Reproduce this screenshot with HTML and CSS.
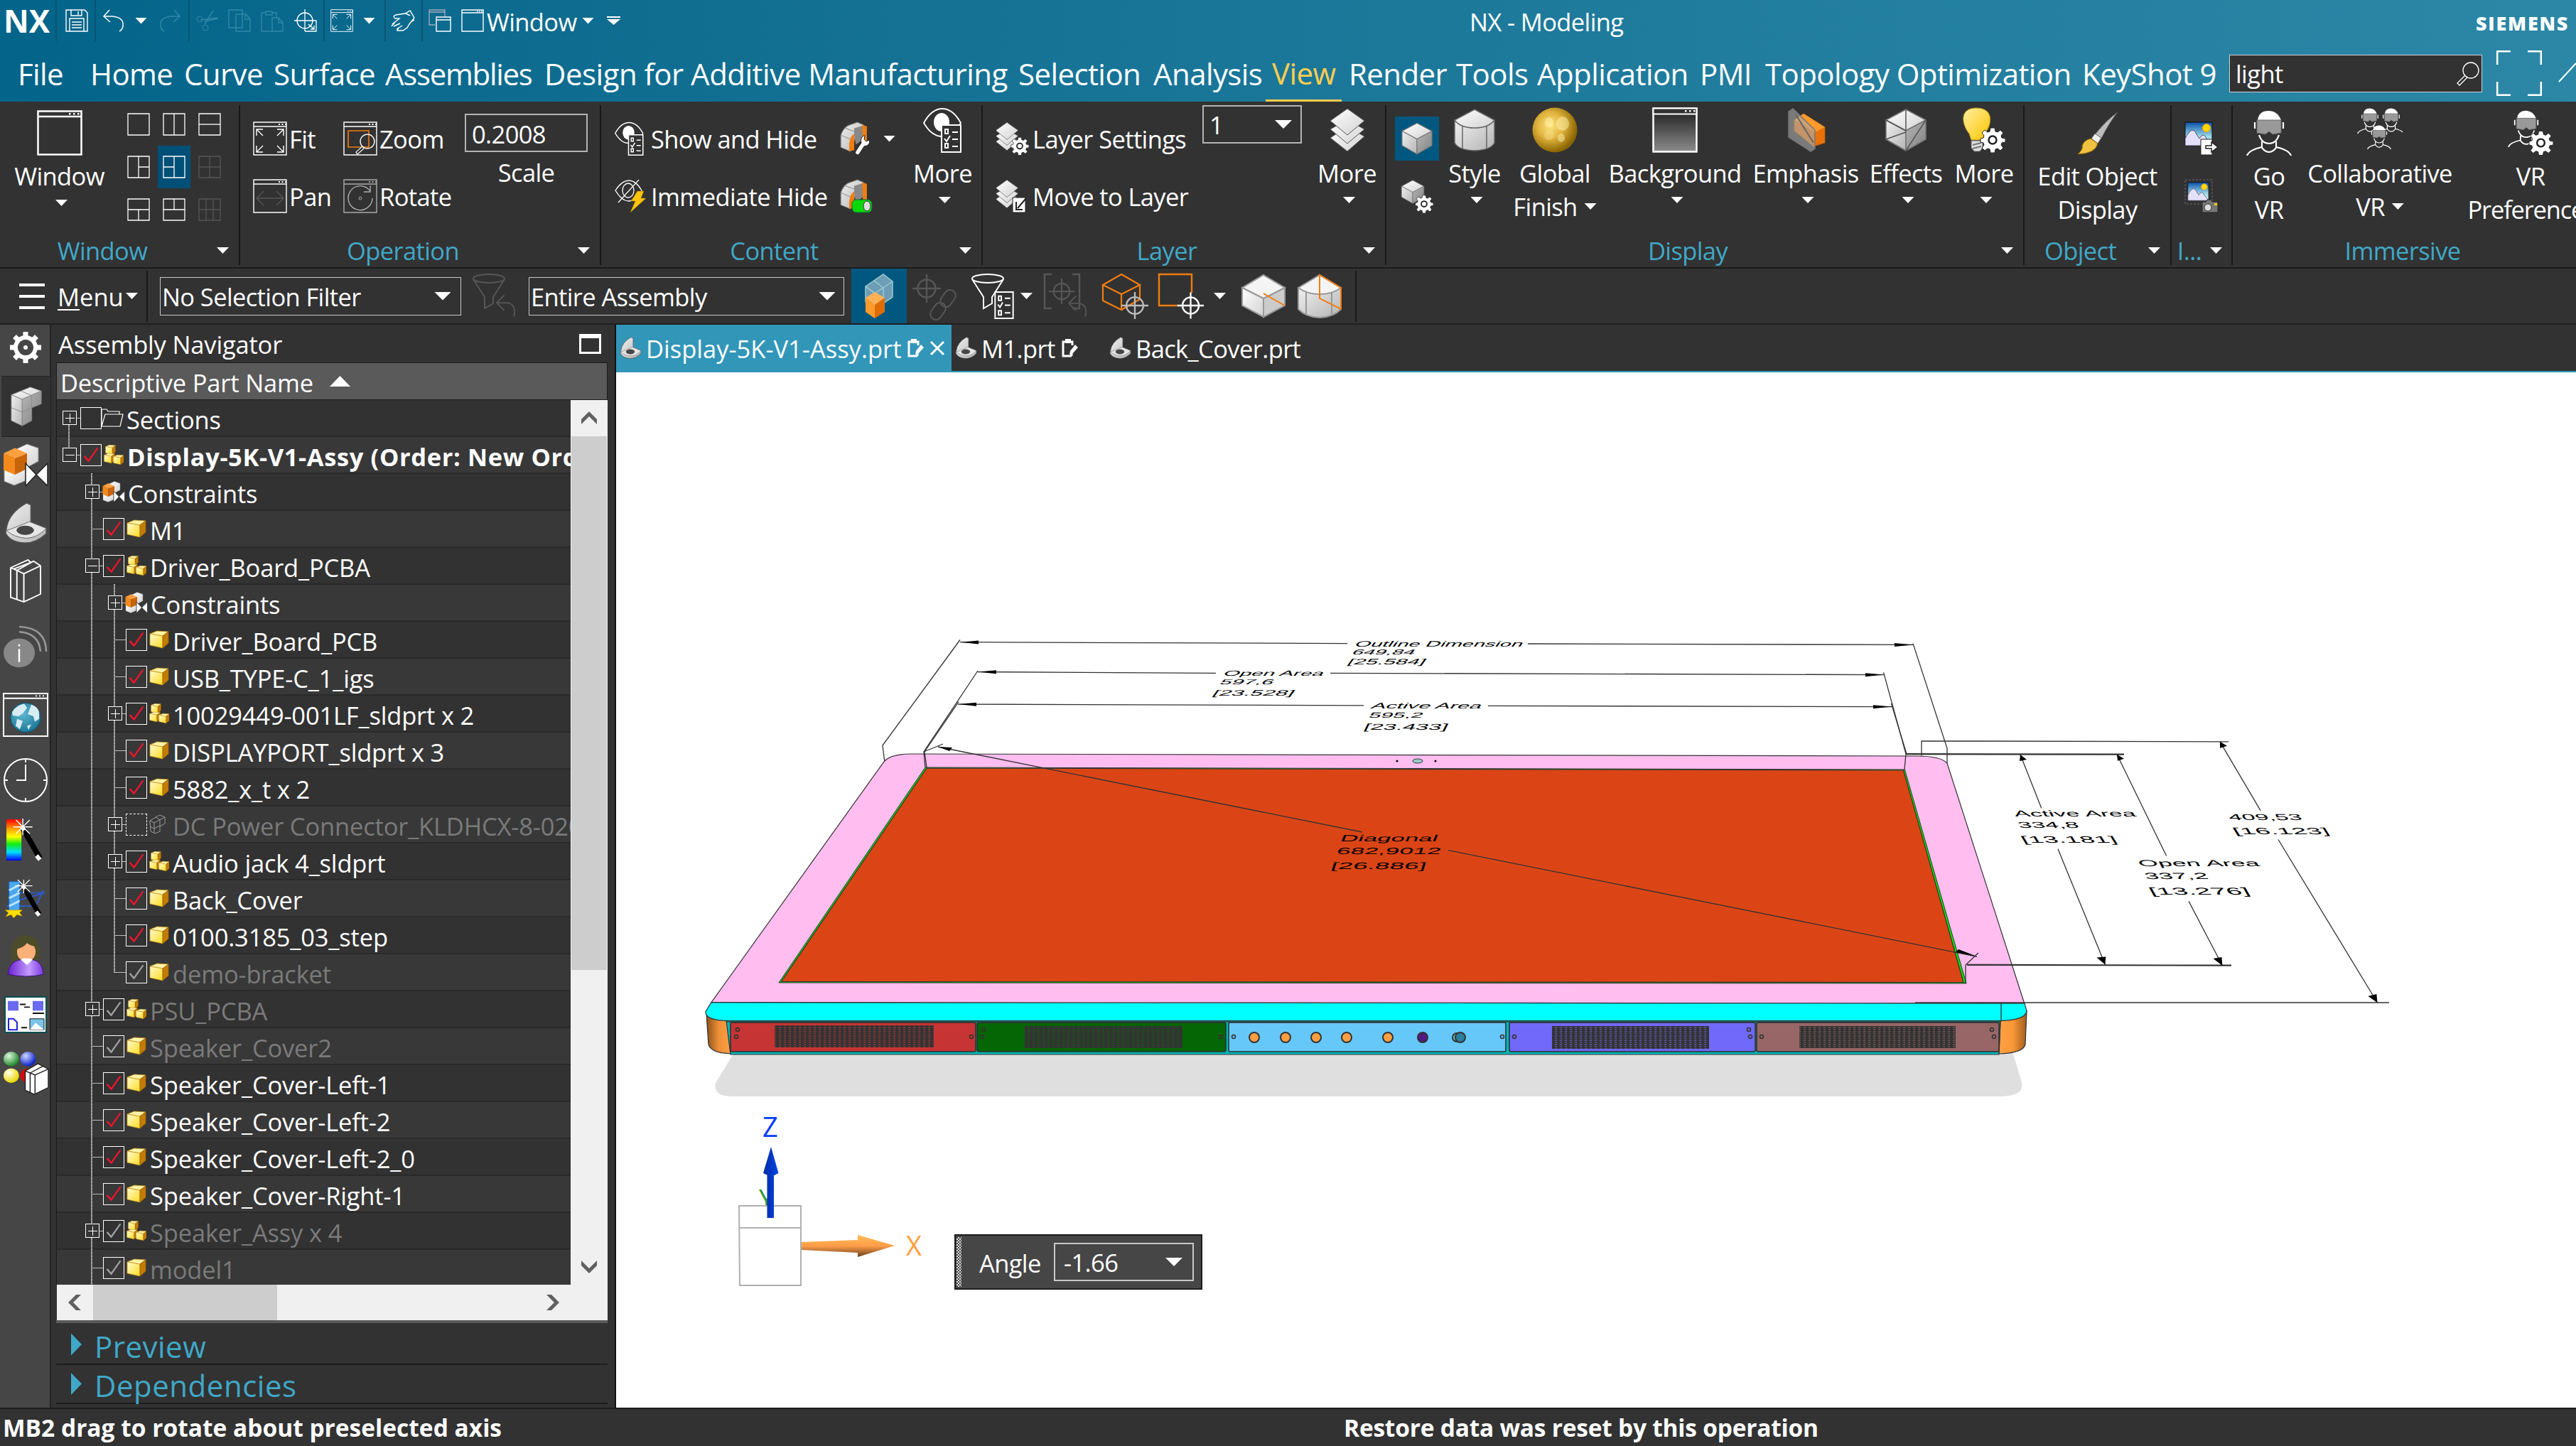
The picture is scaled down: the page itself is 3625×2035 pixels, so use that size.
FILE: index.html
```html
<!DOCTYPE html>
<html lang="en">
<head>
<meta charset="utf-8">
<title>NX - Modeling</title>
<link rel="stylesheet" href="styles.css">
</head>
<body>
<svg class="defs" aria-hidden="true">
  <defs>
    <linearGradient id="gTop" x1="0" y1="0" x2="1" y2="1"><stop offset="0" stop-color="#fff"/><stop offset="1" stop-color="#d2d2d2"/></linearGradient>
    <linearGradient id="gLeft" x1="0" y1="0" x2="1" y2="1"><stop offset="0" stop-color="#f0f0f0"/><stop offset="1" stop-color="#b4b4b4"/></linearGradient>
    <linearGradient id="gRight" x1="0" y1="0" x2="1" y2="1"><stop offset="0" stop-color="#b8b8b8"/><stop offset="1" stop-color="#808080"/></linearGradient>
    <linearGradient id="gYel" x1="0" y1="0" x2="1" y2="1"><stop offset="0" stop-color="#fffbd0"/><stop offset="1" stop-color="#ffdc20"/></linearGradient>
    <linearGradient id="gBg" x1="0" y1="0" x2="0" y2="1"><stop offset="0" stop-color="#1c1c1c"/><stop offset="1" stop-color="#8c8c8c"/></linearGradient>
    <linearGradient id="gBulb" x1="0" y1="0" x2="1" y2="1"><stop offset="0" stop-color="#fff0a0"/><stop offset="1" stop-color="#ffc400"/></linearGradient>
    <linearGradient id="gSky" x1="0" y1="0" x2="0" y2="1"><stop offset="0" stop-color="#0a50a8"/><stop offset=".6" stop-color="#9ad8ea"/><stop offset="1" stop-color="#e8f4f0"/></linearGradient>
    <linearGradient id="gRain" x1="0" y1="0" x2="0" y2="1"><stop offset="0" stop-color="#f00"/><stop offset=".25" stop-color="#fa0"/><stop offset=".42" stop-color="#ff0"/><stop offset=".6" stop-color="#1e1"/><stop offset=".8" stop-color="#0df"/><stop offset="1" stop-color="#00f"/></linearGradient>
    <linearGradient id="gPur" x1="0" y1="0" x2="1" y2="0"><stop offset="0" stop-color="#6a1fd0"/><stop offset=".6" stop-color="#c49aff"/><stop offset="1" stop-color="#7a3ae0"/></linearGradient>
    <radialGradient id="gGold" cx=".4" cy=".4" r=".6"><stop offset="0" stop-color="#ffe680"/><stop offset=".5" stop-color="#dfb23c"/><stop offset="1" stop-color="#8a6400"/></radialGradient>
    <radialGradient id="gGreen" cx=".35" cy=".3" r=".7"><stop offset="0" stop-color="#dff5df"/><stop offset="1" stop-color="#1d8a2a"/></radialGradient>
    <radialGradient id="gBlue" cx=".35" cy=".3" r=".7"><stop offset="0" stop-color="#cfd6ff"/><stop offset="1" stop-color="#0a22c8"/></radialGradient>
    <radialGradient id="gYb" cx=".35" cy=".3" r=".7"><stop offset="0" stop-color="#fffff0"/><stop offset="1" stop-color="#ecd800"/></radialGradient>
    <radialGradient id="gEarth" cx=".4" cy=".35" r=".7"><stop offset="0" stop-color="#5fb8d0"/><stop offset="1" stop-color="#1b7696"/></radialGradient>
  </defs>
  <symbol id="gear" viewBox="0 0 44 44"><path fill="none" stroke="currentColor" stroke-width="6" d="M22 8a14 14 0 1 0 .01 0z"/><path stroke="currentColor" stroke-width="7" d="M22 0v7M22 37v7M0 22h7M37 22h7M6.500 6.500l5 5M32.500 32.500l5 5M6.500 37.500l5-5M32.500 11.500l5-5"/><circle cx="22" cy="22" r="3" fill="currentColor"/></symbol>
  <symbol id="cog" viewBox="0 0 36 36"><path fill="#fff" stroke="#222" stroke-width="1" d="M15 1h6l1 5 3 1 4-3 4 4-3 4 1 3 5 1v5l-5 1-1 3 3 4-4 4-4-3-3 1-1 5h-6l-1-5-3-1-4 3-4-4 3-4-1-3-4-1v-5l4-1 1-3-3-4 4-4 4 3 3-1z"/><circle cx="18" cy="18" r="5.500" fill="#fff" stroke="#222" stroke-width="2.500"/></symbol>
  <symbol id="win" viewBox="0 0 32 32"><path fill="none" stroke="currentColor" stroke-width="1.400" d="M1 1h30v30H1zM1 5h30"/><path stroke="currentColor" stroke-width="1.500" stroke-dasharray="1.500 1.500" d="M22 3h8"/></symbol>
  <symbol id="bigwin" viewBox="0 0 64 64"><path fill="none" stroke="#fff" stroke-width="2.500" d="M1.500 1.500h61v61h-61zM1 9h62"/><path stroke="#fff" stroke-width="2.500" stroke-dasharray="2.500 3.500" d="M45 5.200h16"/></symbol>
  <symbol id="fit" viewBox="0 0 48 48"><path fill="none" stroke="currentColor" stroke-width="1.400" d="M1 1h46v46H1zM1 7h46M5 20v-9h9M5 11l9 9M34 11h9v9M43 11l-9 9M5 34v9h9M5 43l9-9M34 43h9v-9M43 43l-9-9"/><path stroke="currentColor" stroke-width="2" stroke-dasharray="2 2.500" d="M36 4h11"/></symbol>
  <symbol id="zoomi" viewBox="0 0 48 48"><path fill="none" stroke="#fff" stroke-width="1.400" d="M1 1h46v46H1zM1 7h46"/><path stroke="#fff" stroke-width="2" stroke-dasharray="2 2.500" d="M36 4h11"/><path fill="none" stroke="#f07d10" stroke-width="1.600" d="M7 13h29v23H7z"/><circle cx="34" cy="28" r="10" fill="none" stroke="#eee" stroke-width="1.500"/><path fill="#323232" stroke="#eee" stroke-width="1.300" d="M27 35l-9 8 2 3 9-8z"/></symbol>
  <symbol id="pan" viewBox="0 0 48 48"><path fill="none" stroke="#fff" stroke-width="1.400" d="M1 1h46v46H1zM1 7h46"/><path stroke="#fff" stroke-width="2" stroke-dasharray="2 2.500" d="M36 4h11"/><path fill="none" stroke="#555" stroke-width="1.400" d="M5 27h38M15 17L5 27l10 10M33 17l10 10-10 10"/></symbol>
  <symbol id="rot" viewBox="0 0 48 48"><path fill="none" stroke="#aaa" stroke-width="1.400" d="M1 1h46v46H1zM1 7h46M38 17a17 17 0 1 0 3 10M38 9v9h-9"/><circle cx="24" cy="27" r="2" fill="none" stroke="#aaa"/><path stroke="#aaa" stroke-width="2" stroke-dasharray="2 2.500" d="M36 4h11"/></symbol>
  <symbol id="cube" viewBox="0 0 64 64"><g stroke="#777" stroke-width="1.500" stroke-linejoin="round"><path fill="url(#gTop)" d="M32 3l28 15-28 15L4 18z"/><path fill="url(#gLeft)" d="M4 18l28 15v28L4 45z"/><path fill="url(#gRight)" d="M60 18L32 33v28l28-16z"/></g></symbol>
  <symbol id="cyl" viewBox="0 0 64 64"><g stroke="#666" stroke-width="1.500"><path fill="url(#gLeft)" d="M4 18v32q5 10 28 11 23-1 28-11V18z"/><path fill="url(#gTop)" d="M32 3l28 15q-8 11-28 11T4 18z"/><path fill="none" d="M15 27v32M49 27v32"/></g></symbol>
  <symbol id="layers" viewBox="0 0 64 64"><g fill="url(#gTop)" stroke="#555" stroke-width="1"><path d="M32 27l24 14-24 21L8 43z"/><path d="M32 17l24 14-24 20L8 31z"/><path d="M32 2l24 17-24 20L8 19z"/></g></symbol>
  <symbol id="eye" viewBox="0 0 64 64"><path fill="none" stroke="#fff" stroke-width="1.800" d="M1 22Q12 2 27 2t26 20Q42 41 27 41T1 22z"/><ellipse cx="26" cy="21" rx="11" ry="13" fill="#fff"/><path fill="#323232" stroke="#fff" stroke-width="2" d="M26 25h27v38H26z"/><path stroke="#fff" stroke-width="2" fill="none" d="M31 31h4v6h-4zM41 35h8M30 44l3 4 5-8M41 45h8M31 51h4v6h-4zM41 55h8"/></symbol>
  <symbol id="eyehide" viewBox="0 0 48 48"><path fill="none" stroke="#fff" stroke-width="1.300" d="M1 16Q10 2 20 2t18 14Q30 31 20 31T1 16zM5 33L34 1"/><ellipse cx="19" cy="16" rx="8" ry="10" fill="none" stroke="#fff" stroke-width="1.300"/><path fill="#ffc40a" stroke="#9a7400" stroke-width=".6" d="M32 17h9l-4 10h7L22 47l7-16h-6z"/></symbol>
  <symbol id="arch" viewBox="2 0 35 46" preserveAspectRatio="none"><path fill="url(#gLeft)" stroke="#777" d="M3 20Q6 10 12 6L24 1l8 4v10l-9 3-8 26-12-6z"/><path fill="none" stroke="#888" d="M3 20l12 6M9 10l12 5M24 1l-4 2"/><path fill="#888" d="M20 20V10l12-4v20l-10 8z"/><path fill="#f07d10" d="M30 5l6 2v26l-5-3zM14 44Q12 24 20 18v24z"/></symbol>
  <symbol id="wrench" viewBox="0 0 24 30"><path fill="#fff" stroke="#222" d="M3 28a3 3 0 0 1-1-4L10 12q-2-6 3-10l2 0-1 5 3 3 4-2q2 5-3 8l-4 1-7 11q-2 2-4 0z"/></symbol>
  <symbol id="layset" viewBox="0 0 48 48"><use href="#layers" x="-6" y="0" width="42" height="42"/><use href="#cog" x="20" y="21" width="26" height="27"/></symbol>
  <symbol id="laymove" viewBox="0 0 48 48"><use href="#layers" x="-6" y="0" width="42" height="42"/><path fill="#fff" stroke="#222" d="M23 26h18v21H23z"/><path fill="none" stroke="#222" stroke-width="2" d="M42 27L30 41M28 32v11h9"/></symbol>
  <symbol id="archw" viewBox="0 0 48 48"><use href="#arch" x="1" width="39" height="44"/><use href="#wrench" x="20" y="18" width="26" height="30"/></symbol>
  <symbol id="archg" viewBox="0 0 48 48"><use href="#arch" x="1" width="39" height="44"/><rect x="18" y="29" width="28" height="18" rx="6" fill="#0bd80b" stroke="#163"/><ellipse cx="39" cy="38" rx="5" ry="7" fill="#ddd" stroke="#333"/></symbol>
  <symbol id="cubecog" viewBox="0 0 48 48"><use href="#cube" x="0" y="0" width="36" height="36"/><use href="#cog" x="21" y="22" width="26" height="26"/></symbol>
  <symbol id="ball" viewBox="0 0 64 64"><circle cx="32" cy="32" r="31.500" fill="url(#gGold)"/><g fill="#fff3b0" opacity=".5"><ellipse cx="43" cy="23" rx="9" ry="10"/><ellipse cx="24" cy="21" rx="6" ry="7"/><ellipse cx="41" cy="43" rx="5" ry="6"/><ellipse cx="24" cy="39" rx="7" ry="7" opacity=".6"/></g></symbol>
  <symbol id="bgw" viewBox="0 0 64 64"><path fill="url(#gBg)" stroke="#fff" stroke-width="2.500" d="M1.500 1.500h61v61h-61z"/><path fill="#323232" stroke="#fff" stroke-width="2" d="M1.500 1.500h61v8h-61z"/><path stroke="#fff" stroke-width="2.500" stroke-dasharray="2.500 3.500" d="M46 5.200h16"/></symbol>
  <symbol id="emph" viewBox="0 0 64 64"><path fill="#e8710a" stroke="#b85a08" d="M16 18l13-9 30 19v22L43 55 16 33z"/><path fill="#ff9a2c" d="M16 18l13-9 30 19-14 7z"/><path fill="#aaa" fill-opacity=".6" stroke="#777" stroke-width="1.500" d="M8 6l6-4 31 30v26l-6 4L8 42z"/><path stroke="#666" stroke-width="2" d="M18 10l25 40"/></symbol>
  <symbol id="fx" viewBox="0 0 64 64"><use href="#cube" width="64" height="64"/><path fill="none" stroke="#555" stroke-width="1.500" d="M32 3v30L4 18M32 35L4 45M32 61l28-43"/></symbol>
  <symbol id="bulb" viewBox="0 0 64 64"><path fill="url(#gBulb)" stroke="#b89010" d="M21 1c26 0 22 24 12 36l-3 9H14l-3-9C1 25-4 1 21 1z"/><path fill="#ddd" stroke="#666" d="M14 47h16v10l-4 5h-8l-4-5z"/><path stroke="#777" stroke-width="2" d="M16 53l12-3M16 58l12-3"/><use href="#cog" x="26" y="28" width="36" height="36"/></symbol>
  <symbol id="brush" viewBox="0 0 64 64"><path fill="#bbb" stroke="#555" d="M60 3Q48 18 37 40l-9-6Q46 12 60 3z"/><path fill="#eee" stroke="#666" d="M28 33l9 6-5 8-9-7z"/><path fill="#f0c040" stroke="#8a6400" d="M22 40l10 7q-3 14-28 15 8-8 6-12 3-8 12-10z"/></symbol>
  <symbol id="pic" viewBox="0 0 48 48"><path fill="url(#gSky)" stroke="#111" d="M1 1h38v33H1z"/><circle cx="31" cy="9" r="5.500" fill="#ffd800" stroke="#f90"/><path fill="#e4e0fa" stroke="#334" stroke-width=".8" d="M1 24q10-20 16-6l4 6q6-10 10 0l8 10H1z"/></symbol>
  <symbol id="picout" viewBox="0 0 48 48"><use href="#pic" width="48" height="48"/><path fill="#fff" stroke="#222" d="M23 25h16v22H23z"/><path fill="#fff" stroke="#222" stroke-width="1.500" d="M30 34h8v-5l9 7-9 7v-5h-8z"/></symbol>
  <symbol id="piccam" viewBox="0 0 48 48"><path fill="none" stroke="#666" stroke-dasharray="3 2" d="M1 1h38v34H1z"/><use href="#pic" x="4" y="4" width="37" height="37"/><path fill="#777" stroke="#222" d="M25 32h5l2-3h5l2 3h8v15H25z"/><circle cx="33" cy="40" r="5" fill="#ddd" stroke="#333"/><path fill="#fc0" d="M42 34h4v3h-4z"/></symbol>
  <symbol id="vr" viewBox="0 0 64 64"><path fill="#fff" d="M16 14Q18 1 31 1t18 13z"/><path fill="#999" stroke="#666" d="M15 14h34v18l-12 2-5-4-5 4-12-2z"/><path fill="none" stroke="#fff" stroke-width="2.200" d="M12 17v9M52 17v9M18 35q4 12 14 12t14-12M22 44v8q-18 4-21 12M42 44v8q18 4 21 12M22 53q10 12 20 0"/></symbol>
  <symbol id="vr3" viewBox="0 0 64 64"><use href="#vr" x="0" y="0" width="36" height="38"/><use href="#vr" x="30" y="0" width="36" height="38"/><use href="#vr" x="14" y="22" width="34" height="40"/></symbol>
  <symbol id="vrcog" viewBox="0 0 64 64"><use href="#vr" x="0" y="0" width="52" height="52"/><use href="#cog" x="29" y="28" width="35" height="36"/></symbol>
  <symbol id="target" viewBox="0 0 32 32"><circle cx="16" cy="16" r="10" fill="none" stroke="currentColor" stroke-width="2"/><path stroke="currentColor" stroke-width="2" d="M16 0v32M0 16h32"/></symbol>
  <symbol id="asm" viewBox="0 0 48 64" preserveAspectRatio="none"><g stroke="#888" stroke-width="1"><path fill="url(#gTop)" d="M2 14L30 2l16 6-28 13z"/><path fill="url(#gLeft)" d="M2 14l16 7v41L2 54z"/><path fill="url(#gRight)" d="M18 21l28-13v20L32 34v20l-14 8z"/><path fill="none" d="M2 34l16 7 14-7M16 8l16 7v19"/></g></symbol>
  <symbol id="asmc" viewBox="0 0 64 64" preserveAspectRatio="none"><path fill="url(#gTop)" stroke="#888" d="M16 10L34 1l16 6v20L34 36z"/><path fill="url(#gTop)" stroke="#888" d="M2 38l14 8 16-8v18l-16 7-14-6z"/><path fill="#ffa040" d="M1 15L17 7l17 8-17 8z"/><path fill="#f58a1c" d="M1 15l16 8v24L1 40z"/><path fill="#c86408" d="M34 15l-17 8v24l17-9z"/><path fill="#fff" stroke="#222" stroke-width="1.500" d="M32 30l15 17-15 17zM63 30L47 47l16 17z"/></symbol>
  <symbol id="part" viewBox="0 0 28 28" preserveAspectRatio="none"><path fill="#fff3a8" stroke="#c8961a" stroke-width=".8" d="M1 6l10-4 16 1-8 6z"/><path fill="url(#gYel)" stroke="#c8961a" stroke-width=".8" d="M1 6l18 3v17L1 22z"/><path fill="#c27c06" stroke="#a06000" stroke-width=".8" d="M19 9l8-6v16l-8 7z"/></symbol>
  <symbol id="parts" viewBox="0 0 28 28"><use href="#part" x="2" y="-1" width="15" height="16"/><use href="#part" x="0" y="11" width="16" height="16"/><use href="#part" x="13" y="13" width="16" height="16"/></symbol>
  <symbol id="asmline" viewBox="0 0 28 28"><path fill="none" stroke="#999" d="M1 9l10-6 4-2 7 3v9l-7 4v7l-7 3-6-3zM1 9l6 3v14M7 12l15-8M1 17l6 3 8-4V8L9 4"/></symbol>
  <symbol id="folder" viewBox="0 0 32 28"><path fill="none" stroke="#fff" stroke-width="1.200" d="M1 26V2h7l2 3h16v4M1 26L6 9h25l-4 17z"/></symbol>
  <symbol id="bracket" viewBox="0 0 62 62" preserveAspectRatio="none"><path fill="url(#gLeft)" stroke="#555" stroke-width="1.500" d="M3 40Q6 16 32 1l6 3v26l22 9v8q-14 14-30 14Q8 60 2 46z"/><path fill="#e6e6e6" stroke="#666" d="M10 40L36 29l24 10q-12 14-28 15Q14 53 3 42z"/><ellipse cx="30" cy="42" rx="12" ry="6.500" fill="#464646" stroke="#444"/></symbol>
  <symbol id="books" viewBox="0 0 46 66" preserveAspectRatio="none"><path fill="none" stroke="currentColor" stroke-width="2" d="M1 13L26 1l4 4 4-2 10 7v43L20 65 1 58zM1 13l9 4v44M10 17L34 3M10 17l10 5v43M20 22l24-12M5 15L30 5"/></symbol>
  <symbol id="info" viewBox="0 0 62 66" preserveAspectRatio="none"><circle cx="22" cy="42" r="22" fill="#888"/><path stroke="#fff" stroke-width="2.500" d="M22 36v20M22 29v3"/><path fill="none" stroke="#999" stroke-width="2.500" d="M22 10q28 2 30 30M22 2q38 2 38 38"/></symbol>
  <symbol id="web" viewBox="0 0 64 64" preserveAspectRatio="none"><path fill="none" stroke="#fff" stroke-width="2" d="M1 1h62v62H1zM1 8h62"/><path stroke="#fff" stroke-width="2" stroke-dasharray="2 3" d="M46 4.500h14"/><circle cx="32" cy="36" r="21" fill="url(#gEarth)" stroke="#0d5a78"/><path fill="#d8ecf2" d="M13 28q6-10 17-12l4 6-6 8-6 4-8-1zM40 17q9 3 11 11v10l-6 4-2-8-8-3 3-8zM20 38l8 3-4 12-6-5zM34 48l6-2-4 8z"/></symbol>
  <symbol id="clock" viewBox="0 0 62 62"><circle cx="31" cy="31" r="30" fill="none" stroke="#fff" stroke-width="2"/><path fill="none" stroke="#fff" stroke-width="2" d="M31 1v5M31 56v5M1 31h5M56 31h5M31 9v22H18"/></symbol>
  <symbol id="wand" viewBox="0 0 54 62"><path stroke="#000" stroke-width="8" d="M24 14l25 44"/><path stroke="#fff" stroke-width="6" d="M44 54l5 6M22 11l4 6"/><path stroke="#fff" stroke-width="1.500" d="M24 0v24M10 12h28M14 2l20 20M34 2L14 22"/></symbol>
  <symbol id="rain" viewBox="0 0 56 62"><path fill="url(#gRain)" d="M0 1h22v60H0z"/><use href="#wand" width="54" height="62"/></symbol>
  <symbol id="wiz" viewBox="0 0 62 58"><path fill="none" stroke="#2a5ad0" stroke-width="2" d="M6 20h54L10 34M2 40h44l12-24"/><path fill="#4aa8f0" stroke="#1a68c0" d="M6 3h16v44H6z"/><path stroke="#bfe4ff" stroke-width="3" d="M6 16l16-8M6 28l16-8M6 40l16-8"/><path fill="#fd0" stroke="#b80" stroke-width=".6" d="M13 58l-4-5-8 3 4-6-5-4h26l-4 4 4 5-8-2z"/><use href="#wand" x="4" y="-2" width="54" height="58"/></symbol>
  <symbol id="person" viewBox="0 0 52 64" preserveAspectRatio="none"><path fill="#4c4c2a" d="M6 40Q2 2 26 1q24 2 20 34l-8 5z"/><ellipse cx="27" cy="26" rx="13" ry="15" fill="#fbb078"/><path fill="#4c4c2a" d="M12 22Q14 8 30 8q10 2 12 10-8 0-14-5-6 8-16 9z"/><path fill="url(#gPur)" stroke="#40108a" d="M1 60q2-20 18-22l9 7 8-7q14 3 15 22-24 6-50 0z"/><path fill="#fff" d="M19 38l9 8 8-8-4-2H23z"/></symbol>
  <symbol id="diag" viewBox="0 0 60 54" preserveAspectRatio="none"><path fill="#fff" stroke="#0a5050" stroke-width="2" d="M1 1h58v52H1z"/><path fill="#6a6af0" d="M5 7h15v14H5zM40 7h15v14H40z"/><path stroke="#111" stroke-width="2" d="M22 12h8M28 16h8M24 46h8M40 25h16"/><path fill="#fff" stroke="#2222d8" stroke-width="2" d="M6 33h7l5 5v11H6z"/><path fill="#7cc4e8" stroke="#111" d="M36 33h20v16H36z"/><path fill="#fff" d="M36 49l8-10 12 10z"/></symbol>
  <symbol id="balls" viewBox="0 0 66 66" preserveAspectRatio="none"><circle cx="12" cy="12" r="11" fill="url(#gGreen)"/><circle cx="36" cy="12" r="11" fill="url(#gBlue)"/><circle cx="12" cy="37" r="11" fill="url(#gYb)"/><circle cx="36" cy="37" r="11" fill="#d80a0a"/><path fill="#fff" stroke="#222" stroke-width="1.500" d="M32 30l18-11 15 8v28L45 65l-13-6zM32 30l7 3v29M39 33l18-10M39 33l7 3v28M46 36l19-9"/></symbol>
  <symbol id="pin" viewBox="0 0 24 26"><path fill="none" stroke="#fff" stroke-width="3" d="M15 24H3V4h13v5M15 16v8"/><path fill="#fff" d="M6 0h8v6H6zM20 8l4 4-8 9-4 1 1-5z"/></symbol>
  <symbol id="funnel" viewBox="0 0 64 64"><ellipse cx="23" cy="7" rx="22" ry="6" fill="none" stroke="currentColor" stroke-width="2"/><path fill="none" stroke="currentColor" stroke-width="2" d="M1 8l16 25v16l12-7V33L45 8"/></symbol>
  <symbol id="back" viewBox="0 0 32 34"><path fill="none" stroke="currentColor" stroke-width="2" d="M12 1L1 12l11 11M1 12h16q13 3 9 20"/></symbol>
  <symbol id="list" viewBox="0 0 28 40"><path fill="#323232" stroke="#fff" stroke-width="2" d="M1 1h26v38H1z"/><path stroke="#fff" stroke-width="2" fill="none" d="M6 7h4v6H6zM15 10h8M5 19l3 4 4-7M15 20h8M6 28h4v6H6zM15 31h8"/></symbol>
  <symbol id="l1" viewBox="0 0 32 32"><path fill="none" stroke="currentColor" stroke-width="1.300" d="M1 1h30v30H1z"/></symbol>
</svg>

<header class="top">
  <div class="titlebar">
    <b class="nx">NX</b><i class="sep"></i>
    <svg class="i32"><path fill="none" stroke="#fff" stroke-width="1.400" d="M1 1h26l4 4v26H1zM8 1v8h15V1M18 3v5M6 31V13h20v18M9 18h14M9 22h14M9 26h14"/></svg><i class="sep"></i>
    <svg class="i32"><path fill="none" stroke="#fff" stroke-width="1.500" d="M9 1L1 10l9 8M1 10h13q16 2 14 14-1 5-5 7"/></svg><i class="caret"></i>
    <svg class="i32 dim"><path fill="none" stroke="currentColor" stroke-width="1.500" d="M20 1l8 9-9 8M28 10H15Q-1 12 1 24q1 5 5 7"/></svg><i class="sep"></i>
    <svg class="i32 dim"><path fill="none" stroke="currentColor" stroke-width="1.500" d="M24 2L12 21M6 15l24-3M12 17L31 13"/><circle cx="5" cy="14" r="4" fill="none" stroke="currentColor"/><circle cx="13" cy="26" r="4" fill="none" stroke="currentColor"/></svg>
    <svg class="i32 dim"><path fill="none" stroke="currentColor" stroke-width="1.400" d="M1 1h19v25H1zM11 7h14l6 7v17H11zM24 7v7h7"/></svg>
    <svg class="i32 dim"><path fill="none" stroke="currentColor" stroke-width="1.400" d="M16 31H1V5h6M16 5h6v7M7 3h9v5H7zM16 12h9l6 7v12H16zM25 12v7h6"/></svg>
    <svg class="i32"><circle cx="15" cy="16" r="11" fill="none" stroke="#fff" stroke-width="1.300"/><path fill="none" stroke="#fff" stroke-width="1.300" d="M15 0v31M0 16h31v15H15M20 21l8 7M28 23v5h-5"/></svg><i class="sep"></i>
    <svg class="i32 wh"><use href="#fit"/></svg><i class="caret"></i><i class="sep"></i>
    <svg class="i34"><path fill="none" stroke="#fff" stroke-width="1.400" d="M2 21l10-8H6q-4-3 1-5l13-2 7-4 6 10-7 9-3 5-6 4H9l2-4M6 18l-5 6M4 24l9-4M8 28l8-5M21 6l6 3M30 17l3-2"/></svg><i class="sep"></i>
    <svg class="i34"><path fill="none" stroke="#aab" stroke-width="1.300" d="M9 22H1V1h22v10M1 4h22"/><path fill="none" stroke="#fff" stroke-width="1.400" d="M11 11h20v20H11zM11 15h20"/></svg>
    <svg class="i32 wh"><use href="#win"/></svg><span>Window</span><i class="caret"></i><i class="ovf"></i>
    <span>NX - Modeling</span><b class="siemens">SIEMENS</b>
  </div>
  <nav class="tabs">
    <span>File</span><span>Home</span><span>Curve</span><span>Surface</span><span class="tight">Assemblies</span><span class="wide">Design for Additive Manufacturing</span><span>Selection</span><span>Analysis</span><span class="on">View</span><span>Render</span><span>Tools</span><span>Application</span><span>PMI</span><span>Topology Optimization</span><span>KeyShot 9</span>
    <div class="search"><span>light</span><svg width="32" height="34"><circle cx="20" cy="12" r="11" fill="none" stroke="#fff" stroke-width="1.300"/><path fill="none" stroke="#fff" stroke-width="1.300" d="M12 19L1 30l3 3 11-11"/></svg></div>
    <svg width="64" height="64"><path fill="none" stroke="#fff" stroke-width="2.500" d="M1.200 20V1.200H20M44 1.200h18.800V20M62.800 44v18.800H44M20 62.800H1.200V44"/></svg>
    <svg width="25" height="64"><path stroke="#fff" stroke-width="2" d="M1 44L25 18"/></svg>
  </nav>
</header>

<section class="ribbon">
  <div class="group g-window">
    <div class="body">
      <div class="big low"><svg class="i64"><use href="#bigwin"/></svg><span>Window</span><i class="caret"></i></div>
      <div class="layouts">
        <svg><use href="#l1"/></svg><svg><use href="#l1"/><path d="M16 1v30"/></svg><svg><use href="#l1"/><path d="M1 16h30"/></svg>
        <svg><use href="#l1"/><path d="M16 1v30M16 16h15"/></svg><div class="sel"><svg><use href="#l1"/><path d="M16 1v30M1 16h15"/></svg></div><svg class="off"><use href="#l1"/><path d="M16 1v30M1 16h30"/></svg>
        <svg><use href="#l1"/><path d="M1 16h30M16 16v15"/></svg><svg><use href="#l1"/><path d="M1 16h30M16 1v15"/></svg><svg class="off"><use href="#l1"/><path d="M1 16h30M11 1v30M21 1v30"/></svg>
      </div>
    </div>
    <div class="cap"><span>Window</span><i class="caret"></i></div>
  </div>
  <div class="group g-op">
    <div class="body">
      <div class="smalls"><div><svg class="i48 wh"><use href="#fit"/></svg><span>Fit</span></div><div><svg class="i48"><use href="#pan"/></svg><span>Pan</span></div></div>
      <div class="smalls"><div><svg class="i48"><use href="#zoomi"/></svg><span>Zoom</span></div><div><svg class="i48"><use href="#rot"/></svg><span>Rotate</span></div></div>
      <div class="scale"><div class="input">0.2008</div><span>Scale</span></div>
    </div>
    <div class="cap"><span>Operation</span><i class="caret"></i></div>
  </div>
  <div class="group g-content">
    <div class="body">
      <div class="smalls"><div><svg class="i48"><use href="#eye" x="0" y="0" width="48" height="48"/></svg><span>Show and Hide</span></div><div><svg class="i48"><use href="#eyehide"/></svg><span>Immediate Hide</span></div></div>
      <div class="smalls"><div><svg class="i48"><use href="#archw"/></svg><i class="caret sp"></i></div><div><svg class="i48"><use href="#archg"/></svg></div></div>
      <div class="big"><svg class="i64"><use href="#eye" x="4"/></svg><span>More</span><i class="caret"></i></div>
    </div>
    <div class="cap"><span>Content</span><i class="caret"></i></div>
  </div>
  <div class="group g-layer">
    <div class="body">
      <div class="smalls"><div><svg class="i48"><use href="#layset"/></svg><span>Layer Settings</span></div><div><svg class="i48"><use href="#laymove"/></svg><span>Move to Layer</span></div></div>
      <div class="input num">1<i class="caret lg"></i></div>
      <div class="big"><svg class="i64"><use href="#layers"/></svg><span>More</span><i class="caret"></i></div>
    </div>
    <div class="cap"><span>Layer</span><i class="caret"></i></div>
  </div>
  <div class="group g-display">
    <div class="body">
      <div class="pair"><div class="sel"><svg class="i48"><use href="#cube"/></svg></div><svg class="i48"><use href="#cubecog"/></svg></div>
      <div class="big"><svg class="i64"><use href="#cyl"/></svg><span>Style</span><i class="caret"></i></div>
      <div class="big"><svg class="i64"><use href="#ball"/></svg><span>Global</span><span class="row">Finish <i class="caret"></i></span></div>
      <div class="big"><svg class="i64"><use href="#bgw"/></svg><span>Background</span><i class="caret"></i></div>
      <div class="big"><svg class="i64"><use href="#emph"/></svg><span>Emphasis</span><i class="caret"></i></div>
      <div class="big"><svg class="i64"><use href="#fx"/></svg><span>Effects</span><i class="caret"></i></div>
      <div class="big"><svg class="i64"><use href="#bulb"/></svg><span>More</span><i class="caret"></i></div>
    </div>
    <div class="cap"><span>Display</span><i class="caret"></i></div>
  </div>
  <div class="group g-object">
    <div class="body"><div class="big low"><svg class="i64"><use href="#brush"/></svg><span>Edit Object</span><span>Display</span></div></div>
    <div class="cap"><span>Object</span><i class="caret"></i></div>
  </div>
  <div class="group g-image">
    <div class="body"><div class="smalls"><div><svg class="i48"><use href="#picout"/></svg></div><div><svg class="i48"><use href="#piccam"/></svg></div></div></div>
    <div class="cap"><span>I...</span><i class="caret"></i></div>
  </div>
  <div class="group g-vr">
    <div class="body">
      <div class="big low"><svg class="i64"><use href="#vr"/></svg><span>Go</span><span>VR</span></div>
      <div class="big"><svg class="i64"><use href="#vr3"/></svg><span>Collaborative</span><span class="row">VR <i class="caret"></i></span></div>
      <div class="big low"><svg class="i64"><use href="#vrcog"/></svg><span>VR</span><span class="pref">Preferences</span></div>
    </div>
    <div class="cap"><span>Immersive</span></div>
  </div>
</section>

<section class="toolbar">
  <i class="burger"></i><span><u>M</u>enu</span><i class="caret"></i><i class="sep"></i>
  <div class="combo"><span>No Selection Filter</span><i class="caret lg"></i></div>
  <svg class="i64 off"><use href="#funnel"/><use href="#back" x="33" y="29" width="31" height="34"/></svg>
  <div class="combo"><span>Entire Assembly</span><i class="caret lg"></i></div>
  <div class="sel"><svg class="i64"><g stroke="#9cc" stroke-width="1.500"><path fill="#6d9db6" d="M13 18L38 1l13 10v22L26 50 13 40z"/><path fill="none" d="M13 18l13 10v20M26 28l25-17M25 10l13 10v20M13 18l25 18"/></g><path fill="#ffb055" d="M13 34l13-8 14 8-14 10z"/><path fill="#ff9a2c" d="M13 34l13 10v19L13 54z"/><path fill="#e06c08" d="M40 34L26 44v19l14-9z"/></svg></div>
  <svg class="i64 off"><use href="#target" width="40" height="42"/><g fill="none" stroke="currentColor" stroke-width="2"><rect x="28" y="40" width="16" height="26" rx="8" transform="rotate(35 36 53)"/><rect x="42" y="22" width="16" height="26" rx="8" transform="rotate(35 50 35)"/></g></svg>
  <svg class="i64 wh"><use href="#funnel"/><use href="#list" x="29" y="25" width="34" height="39"/></svg><i class="caret"></i>
  <svg class="i64 off"><path fill="none" stroke="currentColor" stroke-width="2.500" d="M11 1H1v48h10M40 1h10v48H40"/><use href="#target" x="7" y="6" width="36" height="38"/><use href="#back" x="34" y="30" width="30" height="33"/></svg>
  <svg class="i64"><path fill="none" stroke="#f07d10" stroke-width="2.200" d="M27 1l26 15-26 13L1 16zM1 16v22l26 13V29M53 16v20L27 51"/><g color="#bbb"><use href="#target" x="27" y="26" width="38" height="38"/></g></svg>
  <svg class="i64"><path fill="none" stroke="#f07d10" stroke-width="2.400" d="M28 45H1V1h46v26"/><g color="#fff"><use href="#target" x="27" y="26" width="37" height="38"/></g></svg><i class="caret"></i>
  <svg class="i64"><g stroke="#999" stroke-width="2"><path fill="#f4f4f4" d="M31 2l30 18-30 15L1 20z"/><path fill="url(#gTop)" d="M1 20l30 15v26L1 45z"/><path fill="#ccc" d="M61 20L31 35v26l30-16z"/></g><path stroke="#f07d10" stroke-width="2" d="M31 28l30 17"/></svg>
  <svg class="i64"><g stroke="#999" stroke-width="2"><path fill="url(#gLeft)" d="M1 20v30q10 11 30 12 20-1 30-12V20z"/><path fill="#f4f4f4" d="M31 2l30 18q-12 9-30 9T1 20z"/><path fill="none" d="M12 25v32M48 27v32"/></g><path fill="none" stroke="#f07d10" stroke-width="2" d="M31 35V2l30 18v30z"/></svg>
  <i class="sep"></i>
</section>

<main class="work">
  <aside class="rail">
    <div class="r1"><svg width="44" height="44" class="wh"><use href="#gear"/></svg></div>
    <div class="r2"><svg width="46" height="58"><use href="#asm"/></svg></div>
    <svg width="64" height="60"><use href="#asmc"/></svg>
    <svg width="61" height="58"><use href="#bracket"/></svg>
    <svg width="45" height="61" class="wh"><use href="#books"/></svg>
    <svg width="62" height="61"><use href="#info"/></svg>
    <svg width="64" height="62"><use href="#web"/></svg>
    <svg width="62" height="62"><use href="#clock"/></svg>
    <svg width="54" height="60"><use href="#rain"/></svg>
    <svg width="60" height="54"><use href="#wiz"/></svg>
    <svg width="52" height="60"><use href="#person"/></svg>
    <svg width="60" height="52"><use href="#diag"/></svg>
    <svg width="65" height="62"><use href="#balls"/></svg>
  </aside>
  <section class="panel">
    <div class="ptitle"><span>Assembly Navigator</span><i class="max"></i></div>
    <div class="phead"><span>Descriptive Part Name</span><i class="up"></i></div>
    <div class="pbody">
      <ul class="tree">
        <li><i class="br ex plus first"></i><i class="ck none"></i><svg class="w"><use href="#folder"/></svg><span>Sections</span></li>
        <li class="b"><i class="br ex last"></i><i class="ck"></i><svg><use href="#parts"/></svg><span>Display-5K-V1-Assy (Order: New Order)</span></li>
        <li><i></i><i class="br ex plus"></i><svg class="w"><use href="#asmc"/></svg><span>Constraints</span></li>
        <li><i></i><i class="br"></i><i class="ck"></i><svg><use href="#part"/></svg><span>M1</span></li>
        <li><i></i><i class="br ex"></i><i class="ck"></i><svg><use href="#parts"/></svg><span>Driver_Board_PCBA</span></li>
        <li><i></i><i class="ln"></i><i class="br ex plus"></i><svg class="w"><use href="#asmc"/></svg><span>Constraints</span></li>
        <li><i></i><i class="ln"></i><i class="br"></i><i class="ck"></i><svg><use href="#part"/></svg><span>Driver_Board_PCB</span></li>
        <li><i></i><i class="ln"></i><i class="br"></i><i class="ck"></i><svg><use href="#part"/></svg><span>USB_TYPE-C_1_igs</span></li>
        <li><i></i><i class="ln"></i><i class="br ex plus"></i><i class="ck"></i><svg><use href="#parts"/></svg><span>10029449-001LF_sldprt x 2</span></li>
        <li><i></i><i class="ln"></i><i class="br"></i><i class="ck"></i><svg><use href="#part"/></svg><span>DISPLAYPORT_sldprt x 3</span></li>
        <li><i></i><i class="ln"></i><i class="br"></i><i class="ck"></i><svg><use href="#part"/></svg><span>5882_x_t x 2</span></li>
        <li class="g"><i></i><i class="ln"></i><i class="br ex plus"></i><i class="ck none dash"></i><svg><use href="#asmline"/></svg><span>DC Power Connector_KLDHCX-8-0202</span></li>
        <li><i></i><i class="ln"></i><i class="br ex plus"></i><i class="ck"></i><svg><use href="#parts"/></svg><span>Audio jack 4_sldprt</span></li>
        <li><i></i><i class="ln"></i><i class="br"></i><i class="ck"></i><svg><use href="#part"/></svg><span>Back_Cover</span></li>
        <li><i></i><i class="ln"></i><i class="br"></i><i class="ck"></i><svg><use href="#part"/></svg><span>0100.3185_03_step</span></li>
        <li class="g"><i></i><i class="ln"></i><i class="br last"></i><i class="ck"></i><svg><use href="#part"/></svg><span>demo-bracket</span></li>
        <li class="g"><i></i><i class="br ex plus"></i><i class="ck"></i><svg><use href="#parts"/></svg><span>PSU_PCBA</span></li>
        <li class="g"><i></i><i class="br"></i><i class="ck"></i><svg><use href="#part"/></svg><span>Speaker_Cover2</span></li>
        <li><i></i><i class="br"></i><i class="ck"></i><svg><use href="#part"/></svg><span>Speaker_Cover-Left-1</span></li>
        <li><i></i><i class="br"></i><i class="ck"></i><svg><use href="#part"/></svg><span>Speaker_Cover-Left-2</span></li>
        <li><i></i><i class="br"></i><i class="ck"></i><svg><use href="#part"/></svg><span>Speaker_Cover-Left-2_0</span></li>
        <li><i></i><i class="br"></i><i class="ck"></i><svg><use href="#part"/></svg><span>Speaker_Cover-Right-1</span></li>
        <li class="g"><i></i><i class="br ex plus"></i><i class="ck"></i><svg><use href="#parts"/></svg><span>Speaker_Assy x 4</span></li>
        <li class="g"><i></i><i class="br"></i><i class="ck"></i><svg><use href="#part"/></svg><span>model1</span></li>
      </ul>
      <div class="vbar"><svg width="24" height="20"><path d="M12 1l11 11v7L12 8 1 19v-7z"/></svg><i></i><svg width="24" height="20"><path d="M12 19L23 8V1L12 12 1 1v7z"/></svg></div>
    </div>
    <div class="hbar"><svg width="20" height="24"><path d="M1 12L12 1h7L8 12l11 11h-7z"/></svg><i></i><svg width="20" height="24"><path d="M19 12L8 1H1l11 11L1 23h7z"/></svg></div>
    <div class="fold first"><i></i><span>Preview</span></div>
    <div class="fold"><i></i><span>Dependencies</span></div>
  </section>
  <section class="docs">
    <div class="doctabs">
      <div class="doc on"><svg width="31" height="31"><use href="#bracket"/></svg><span>Display-5K-V1-Assy.prt</span><svg width="24" height="26"><use href="#pin"/></svg><svg class="close" width="20" height="20"><path stroke="#fff" stroke-width="3" d="M1 1l18 18M19 1L1 19"/></svg></div>
      <div class="doc"><svg width="31" height="31"><use href="#bracket"/></svg><span>M1.prt</span><svg width="24" height="26"><use href="#pin"/></svg></div>
      <div class="doc"><svg width="31" height="31"><use href="#bracket"/></svg><span>Back_Cover.prt</span></div>
    </div>
    <div class="view">
      <svg class="scene" viewBox="867 524 2758 1457">
        <defs>
          <pattern id="mesh" width="7" height="6" patternUnits="userSpaceOnUse"><path stroke="#333" stroke-width="4.500" d="M1 0l2 6"/><path stroke="#333" stroke-width="2.200" d="M0 1.500h7M0 4.500h7"/></pattern>
          <linearGradient id="sideL"><stop offset="0" stop-color="#8a5018"/><stop offset=".5" stop-color="#ee9038"/><stop offset="1" stop-color="#ffa046"/></linearGradient>
          <linearGradient id="sideR"><stop offset="0" stop-color="#ffa046"/><stop offset=".5" stop-color="#f89838"/><stop offset="1" stop-color="#a05c1c"/></linearGradient>
          <linearGradient id="coneX" x1="0" y1="0" x2="0" y2="1"><stop offset="0" stop-color="#ffbd55"/><stop offset=".5" stop-color="#ff9d48"/><stop offset="1" stop-color="#6a4020"/></linearGradient>
          <linearGradient id="coneZ"><stop offset="0" stop-color="#0028a0"/><stop offset="1" stop-color="#0046e8"/></linearGradient>
        </defs>
        <path fill="#dfdfdf" d="M1034 1480L1007 1524q-4 19 23 19H2817q32-1 28-20L2832 1480z"/>
        <g stroke="#333" stroke-width="1.200">
          <path fill="url(#sideL)" d="M994 1426l3 44q4 12 32 13l-5-47z"/>
          <path fill="url(#sideR)" d="M2815 1437l-2 46q34-1 37-13l2-47z"/>
          <path fill="#00b8b8" d="M1022 1436H2815l-2 48H1028z"/>
          <path fill="#0ff" d="M1001 1410.600l-8 13q-1 12 30 13H2815q36-1 37-14l-3-10.600z"/>
          <path fill="#ffbdf0" d="M1244.700 1071q10-10 36-10L2697 1064q34 0 43 10L2848.700 1412 1001 1410.600z"/>
        </g>
        <path fill="none" stroke="#333" stroke-width="3" stroke-opacity=".6" d="M1022 1437.500H2815"/>
        <path fill="#00e800" stroke="#333" stroke-width="1" d="M1302 1080L1096 1383 2767 1384 2680.400 1083z"/>
        <path fill="#db4516" stroke="#333" stroke-width="1.200" d="M1304 1081L1099.500 1381.500 2763 1382.500 2678.500 1084z"/>
        <g stroke="#2d2d2d" stroke-width="1.500">
          <rect x="1028" y="1439" width="345" height="41" rx="2" fill="#c63434"/><rect x="1375" y="1439" width="350" height="41" rx="2" fill="#056605"/>
          <rect x="1729" y="1439" width="390" height="41" rx="2" fill="#66c7f9"/><rect x="2124" y="1439" width="346" height="41" rx="2" fill="#7169f9"/><rect x="2472" y="1439" width="341" height="41" rx="2" fill="#986666"/>
        </g>
        <g fill="url(#mesh)"><path d="M1090 1443h224v31h-224zM1442 1444h222v31h-222zM2184 1444h221v32h-221zM2532 1444h220v31h-220z"/></g>
        <g fill="#ff9f43" stroke="#333" stroke-width="2"><circle cx="1765" cy="1460" r="7"/><circle cx="1809" cy="1460" r="7"/><circle cx="1852" cy="1460" r="7"/><circle cx="1895" cy="1460" r="7"/><circle cx="1953" cy="1460" r="7"/><circle cx="2002" cy="1460" r="7" fill="#501a80"/><circle cx="2050" cy="1460" r="6" fill="#5cc0c0"/><circle cx="2055" cy="1460" r="7" fill="#2a7f9a"/></g>
        <g fill="none" stroke="#333" stroke-width="1.500"><circle cx="1036" cy="1459" r="2.500"/><circle cx="1038" cy="1449" r="2.500"/><circle cx="1367" cy="1459" r="2.500"/><circle cx="1382" cy="1459" r="2.500"/><circle cx="1384" cy="1449" r="2.500"/><circle cx="1718" cy="1459" r="2.500"/><circle cx="1736" cy="1459" r="2.500"/><circle cx="2114" cy="1459" r="2.500"/><circle cx="2131" cy="1459" r="2.500"/><circle cx="2463" cy="1459" r="2.500"/><circle cx="2461" cy="1449" r="2.500"/><circle cx="2479" cy="1459" r="2.500"/><circle cx="2806" cy="1459" r="2.500"/><circle cx="2803" cy="1449" r="2.500"/></g>
        <ellipse cx="1995" cy="1071" rx="7" ry="3" fill="#9cc" stroke="#333"/><circle cx="1966" cy="1071" r="1.500"/><circle cx="2020" cy="1071" r="1.500"/>
        <g fill="none" stroke="#333" stroke-width="1.300">
          <path d="M1244.700 1071L1242 1049 1351 900.500M1351 903.700L1896 905.600M2150 906L2692 907.400M2692 905.600L2740 1053v21"/>
          <path d="M1302 1080l-2-22L1376 944M1376 945.500L1711 947.300M1872 947.300L2651 949.600M2650.600 946.400L2682 1061l-2 22"/>
          <path d="M1304 1080l-3-22L1349 987.700M1348 991L1919 992.800M2094 993.300L2662 994.600M2661.400 990L2683 1061"/>
          <path d="M1300 1058L1327 1047M1320 1051L1917 1171M2038 1196.600L2782 1346.300M2784 1341L2766 1358v26"/>
          <path stroke-width="2.200" d="M2682 1061.200L2989 1061.700M2768 1357.800L3140 1358.700"/>
          <path d="M2979 1061.700L3048.600 1204.500M3080 1268.300L3127.400 1359M2843 1062L2872.800 1137.400M2896 1194.800L2962.400 1357.400M2704 1063.500V1042.800L3136 1043.800M3124 1043.800L3181 1140.600M3206 1181.500L3345.400 1411M2695 1411L3362 1411M2816 1437v-26"/>
        </g>
        <path d="M1351 903.700l26-2.200v5zM2692 907.400l-26-2.400v5zM1376 945.500l26-2.300v5zM2651 949.600l-26-2.400v5zM1348 991l26-2.300v5zM2662 994.600l-26-2.400v5zM1320 1051l20 1-4 5zM2782 1346l-30-6 4-4zM2979 1061.700l1 9 9-3zM2843 1062l-1 9 10-2zM3124 1043.800l0 9 10-3zM3127.400 1359l-13-10 12-2zM2962.400 1357.400l-12-10 13-1zM3345.400 1411l-13-9 12-3z"/>
        <g class="dims">
          <text transform="matrix(1 0 -.4 .56 1905 910)" textLength="236" lengthAdjust="spacingAndGlyphs">Outline Dimension</text>
          <text transform="matrix(1 0 -.4 .5 1901 920.500)" textLength="88" lengthAdjust="spacingAndGlyphs">649,84</text>
          <text transform="matrix(1 0 -.4 .56 1895 935.400)" textLength="109" lengthAdjust="spacingAndGlyphs">[25.584]</text>
          <text transform="matrix(1 0 -.4 .52 1720 950.500)" textLength="141" lengthAdjust="spacingAndGlyphs">Open Area</text>
          <text transform="matrix(1 0 -.4 .5 1715 963)" textLength="75" lengthAdjust="spacingAndGlyphs">597,6</text>
          <text transform="matrix(1 0 -.4 .56 1705 978.600)" textLength="114" lengthAdjust="spacingAndGlyphs">[23.528]</text>
          <text transform="matrix(1 0 -.4 .56 1928 996.500)" textLength="155" lengthAdjust="spacingAndGlyphs">Active Area</text>
          <text transform="matrix(1 0 -.3 .52 1925 1010)" textLength="76" lengthAdjust="spacingAndGlyphs">595,2</text>
          <text transform="matrix(1 0 -.3 .6 1918 1026.800)" textLength="118" lengthAdjust="spacingAndGlyphs">[23.433]</text>
          <text transform="matrix(1 0 -.25 .64 1885 1184)" textLength="137" lengthAdjust="spacingAndGlyphs">Diagonal</text>
          <text transform="matrix(1 0 -.2 .64 1880 1202)" textLength="147" lengthAdjust="spacingAndGlyphs">682,9012</text>
          <text transform="matrix(1 0 -.2 .66 1872 1223)" textLength="134" lengthAdjust="spacingAndGlyphs">[26.886]</text>
          <text transform="matrix(1 0 .3 .6 2836 1149)" textLength="171" lengthAdjust="spacingAndGlyphs">Active Area</text>
          <text transform="matrix(1 0 .3 .6 2842 1165)" textLength="85" lengthAdjust="spacingAndGlyphs">334,8</text>
          <text transform="matrix(1 0 .4 .66 2847 1186)" textLength="134" lengthAdjust="spacingAndGlyphs">[13.181]</text>
          <text transform="matrix(1 0 .3 .62 3011 1219)" textLength="170" lengthAdjust="spacingAndGlyphs">Open Area</text>
          <text transform="matrix(1 0 .3 .62 3020 1237)" textLength="89" lengthAdjust="spacingAndGlyphs">337,2</text>
          <text transform="matrix(1 0 .4 .7 3027 1259)" textLength="141" lengthAdjust="spacingAndGlyphs">[13.276]</text>
          <text transform="matrix(1 0 .3 .6 3138 1153.500)" textLength="103" lengthAdjust="spacingAndGlyphs">409,53</text>
          <text transform="matrix(1 0 .4 .64 3145 1173.500)" textLength="135" lengthAdjust="spacingAndGlyphs">[16.123]</text>
        </g>
        <g class="axis">
          <text x="1068" y="1702" fill="#2f9a35">Y</text>
          <path fill="#fff" stroke="#b0b0b0" stroke-width="2" d="M1040 1697h87v112h-86zM1041 1728h86"/>
          <path fill="url(#coneZ)" d="M1079.500 1650h9.500v64h-9.500zM1085 1614l10.500 37q-10 7-21.500 0z"/>
          <path fill="url(#coneX)" d="M1128 1748l79-3v18l-79-4zM1207 1738v31l52-16z"/>
          <text x="1073" y="1600" fill="#0040ff">Z</text>
          <text x="1275" y="1767" fill="#ff9f43">X</text>
        </g>
      </svg>
      <div class="angle"><i class="grip"></i><span>Angle</span><div class="abox">-1.66<i class="caret lg"></i></div></div>
    </div>
  </section>
</main>
<footer class="status"><span>MB2 drag to rotate about preselected axis</span><span class="mid">Restore data was reset by this operation</span></footer>
</body>
</html>
```
FILE: styles.css
```css
* { box-sizing: border-box; }
html, body { margin: 0; }
body {
  width: 3625px; height: 2035px; overflow: hidden;
  display: flex; flex-direction: column;
  background: #323232; color: #fff;
  font: 34.5px/47px "Open Sans", "Noto Sans", sans-serif;
  letter-spacing: -.018em; white-space: nowrap;
}
svg { display: block; flex: none; overflow: visible; }
i { font-style: normal; display: block; flex: none; }
.defs { width: 0; height: 0; position: absolute; }
.i32 { width: 32px; height: 32px; }
.i34 { width: 34px; height: 32px; }
.i48 { width: 48px; height: 48px; }
.i64 { width: 64px; height: 64px; }
.wh { color: #fff; }
.off { color: #565656; }
.dim { color: #3088a8; }
.caret { width: 17px; height: 9px; background: #fff; clip-path: polygon(0 0, 100% 0, 50% 100%); }
.caret.lg { width: 24px; height: 12px; }

/* title bar and tabs */
.top { height: 143px; background: linear-gradient(90deg, #046489, #1b7799 50%, #2c87a6); }
.titlebar {
  height: 58px; padding-left: 5px; display: grid; align-items: center;
  grid-template-columns: 73px 14px 41px 12px 45px 35px 40px 11px 45px 46px 47px 41px 10px 46px 30px 9px 43px 10px 46px 36px 134px 35px 1214px 1416px 141px;
}
.titlebar .sep { width: 2px; height: 58px; background: #0a5473; }
.titlebar span { padding-top: 2px; }
.nx { font-size: 44px; letter-spacing: 0; }
.siemens { font-size: 27px; font-weight: 800; letter-spacing: .065em; padding-top: 6px; }
.ovf { width: 19px; height: 12px; background: #fff; clip-path: polygon(0 0, 100% 0, 100% 2px, 0 2px, 0 4px, 100% 4px, 50% 100%, 0 4px); }
.tabs {
  height: 85px; padding: 5px 0 0 25px; display: grid; align-items: center;
  grid-template-columns: 102px 132px 126px 157px 224px 667px 190px 159px 116px 151px 114px 229px 92px 446px 207px 376px 87px 25px;
  font-size: 42px; letter-spacing: -.014em;
}
.tabs .tight { letter-spacing: -.031em; }
.tabs .wide { letter-spacing: -.012em; }
.tabs > .on { color: #ffcd50; height: 80px; line-height: 80px; width: 107px; padding-left: 9px; margin-left: -1px; border-bottom: 3px solid #ffcd50; }
.search { width: 356px; height: 53px; background: #323232; border: 1px solid #d0d0d0; display: flex; align-items: center; justify-content: space-between; padding: 1px 3px 0 8px; font-size: 34.5px; }

/* ribbon */
.ribbon { height: 233px; padding: 5px 0 3px; display: flex; overflow: hidden; }
.group { display: flex; flex-direction: column; flex: none; border-right: 2px solid #191919; height: 225px; }
.body { height: 185px; display: grid; align-items: start; }
.cap { height: 39px; display: flex; align-items: center; color: #40a8c8; }
.cap span { flex: 1; text-align: center; line-height: 40px; }
.cap .caret { margin: 0 14px 0 17px; }
.big { display: flex; flex-direction: column; align-items: center; padding-top: 3px; }
.big.low { padding-top: 7px; }
.big .i64 { margin-bottom: 5px; }
.big > .caret { margin: 10px 0 0 6px; }
.big .row { display: flex; align-items: center; gap: 10px; }
.smalls { padding-top: 23px; display: flex; flex-direction: column; gap: 33px; }
.smalls > div { display: flex; align-items: center; gap: 3px; }
.smalls .sp { margin: 0 0 0 11px; align-self: center; }
.sel { background: #005880; }
.input { border: 2px solid #b4b4b4; }
.g-window { width: 338px; }
.g-window .big { padding-right: 3px; }
.g-window .body { grid-template-columns: 170px 1fr; }
.layouts { display: grid; grid-template-columns: repeat(3, 50px); grid-template-rows: 60px 60px 60px; place-items: center; margin-top: -3px; }
.layouts svg { width: 32px; height: 32px; stroke: currentColor; stroke-width: 1.3; fill: none; }
.layouts .sel { width: 46px; height: 60px; display: grid; place-items: center; background: #004f77; }
.g-op { width: 508px; }
.g-op .body { padding-left: 18px; grid-template-columns: 127px 171px 173px; }
.scale { text-align: center; padding-top: 12px; line-height: 57px; }
.scale .input { height: 54px; line-height: 53px; text-align: left; padding-left: 8px; }
.g-content { width: 537px; }
.g-content .body { padding-left: 19px; grid-template-columns: 316px 106px 79px; }
.g-layer { width: 568px; }
.g-layer .body { padding-left: 19px; grid-template-columns: 290px 163px 81px; }
.num { width: 140px; height: 54px; display: flex; align-items: center; justify-content: space-between; padding: 0 12px 0 8px; }
.g-display { width: 898px; }
.g-display .body { padding-left: 12px; grid-template-columns: 62px 100px 126px 212px 156px 126px 94px; }
.pair { padding-top: 16px; display: flex; flex-direction: column; align-items: center; gap: 26px; }
.pair .sel { width: 62px; height: 62px; display: grid; place-items: center; }
.g-object { width: 207px; }
.g-image { width: 86px; }
.g-image .body { padding-left: 18px; }
.g-image .cap .caret { margin: 0 13px 0 4px; }
.g-vr { width: 526px; border: 0; }
.g-vr .body { grid-template-columns: 102px 210px 214px; }
.g-vr .cap { padding-right: 48px; }
.pref { letter-spacing: -.035em; padding-left: 2px; }

/* selection bar */
.toolbar {
  height: 81px; border-top: 2px solid #1b1b1b; border-bottom: 2px solid #1f1f1f; padding-left: 27px; display: grid; align-items: center;
  grid-template-columns: 54px 96px 29px 19px 440px 79px 454px 86px 83px 69px 33px 82px 79px 78px 39px 79px 81px 2px;
}
.toolbar span { padding-top: 2px; }
.toolbar > span { letter-spacing: 0; }
.toolbar .sep { width: 2px; height: 72px; background: #191919; }
.burger { width: 36px; height: 36px; background: linear-gradient(#fff 4px, transparent 4px 16px, #fff 16px 20px, transparent 20px 32px, #fff 32px); }
.combo { width: 424px; height: 54px; border: 1.500px solid #c8c8c8; display: flex; align-items: center; justify-content: space-between; padding: 0 13px 0 2px; }
.combo ~ .combo { width: 444px; padding-right: 11px; }
.toolbar .sel { width: 78px; height: 77px; display: grid; place-items: center; }
.toolbar u { text-decoration-thickness: 2px; text-underline-offset: 4px; }

/* left rail */
.work { height: 1524px; display: flex; }
.rail { width: 72px; background: #464646; border-right: 2px solid #232323; display: flex; flex-direction: column; align-items: center; padding-left: 2px; }
.r1 { height: 72px; padding-top: 10px; }
.r2 { width: 69px; height: 86px; background: #323232; display: grid; place-items: center; border: solid #222; border-width: 1px 0; margin-left: 1px; }
.rail > svg:nth-of-type(1) { margin: 9px 0 23px; }
.rail > svg:nth-of-type(2) { margin-bottom: 22px; }
.rail > svg:nth-of-type(3) { margin-bottom: 32px; }
.rail > svg:nth-of-type(4) { margin-bottom: 34px; }
.rail > svg:nth-of-type(5) { margin-bottom: 30px; }
.rail > svg:nth-of-type(6) { margin-bottom: 23px; }
.rail > svg:nth-of-type(7) { margin-bottom: 26px; }
.rail > svg:nth-of-type(8) { margin-bottom: 23px; }
.rail > svg:nth-of-type(9) { margin-bottom: 27px; }
.rail > svg:nth-of-type(10) { margin-bottom: 25px; }

/* navigator */
.panel { width: 793px; padding-left: 7px; padding-right: 10px; display: flex; flex-direction: column; letter-spacing: -.005em; }
.ptitle { height: 53px; display: flex; align-items: center; justify-content: space-between; padding: 2px 9px 2px 3px; }
.ptitle span { padding-top: 2px; }
.max { width: 31px; height: 28px; border: 3px solid #fff; border-top-width: 6px; }
.phead { height: 53px; background: #5a5a5a; border: 1px solid #1c1c1c; display: flex; align-items: center; gap: 23px; padding: 3px 0 0 5px; }
.up { width: 29px; height: 15px; background: #fff; clip-path: polygon(50% 0, 100% 100%, 0 100%); margin-top: -3px; }
.pbody { height: 1245px; display: flex; border-left: 1px solid #1c1c1c; }
.tree { margin: 0; padding: 0; list-style: none; width: 723px; overflow: hidden; }
.tree li { height: 52px; display: flex; align-items: center; padding-left: 1px; border-bottom: 2px solid #2a2a2a; background: #323232; }
.tree li:nth-child(even) { background: #383838; }
.tree li span { padding: 4px 0 0 1px; }
.tree li.b { font-weight: 700; letter-spacing: .018em; }
.tree li.g { color: #7a7a7a; }
.tree svg { width: 28px; height: 28px; margin: 0 4px 0 3px; }
.tree svg.w { width: 32px; height: 30px; margin: 0 3px 0 -1px; }
.tree li > i { width: 32px; height: 52px; }
.tree li > i.ln, .tree li > i.br { background: repeating-linear-gradient(#ddd 0 1px, #555 1px 2px) 15px 0 / 2px 100% no-repeat; }
.tree li > i.br { background: linear-gradient(90deg, #bbb, #bbb) 16px 26px / 16px 1px no-repeat, repeating-linear-gradient(#ddd 0 1px, #555 1px 2px) 15px 0 / 2px 100% no-repeat; }
.tree li > i.br.last { background-size: 16px 1px, 2px 27px; }
.tree li > i.br.first { background-position: 16px 26px, 15px 26px; }
.ex { display: grid; place-items: center start; padding-left: 7px; }
.ex::before { content: ""; width: 18px; height: 18px; border: 1.500px solid #fff; background: linear-gradient(#fff, #fff) center / 13px 1px no-repeat, #353535; }
.ex.plus::before { background: linear-gradient(#fff, #fff) center / 13px 1px no-repeat, linear-gradient(#fff, #fff) center / 1px 13px no-repeat, #353535; }
.tree li > i.ck { width: 30px; height: 31px; border: 1.500px solid #fff; display: grid; place-items: center; }
.ck::before { content: ""; width: 21px; height: 20px; background: #f0142d; clip-path: polygon(0 62%, 10% 56%, 33% 84%, 90% 0, 100% 4%, 36% 100%, 31% 100%); }
.g .ck::before { background: #a0a0a0; }
.ck.none::before { background: none; }
.tree li > i.dash { border-style: dashed; }
.vbar { width: 52px; background: #f0f0f0; display: flex; flex-direction: column; align-items: center; padding: 15px 0; fill: #606060; }
.vbar i { width: 50px; height: 751px; margin: 16px 0 408px; background: #cdcdcd; }
.hbar { height: 50px; margin-left: 1px; background: #f0f0f0; display: flex; align-items: center; padding-left: 15px; fill: #606060; }
.hbar i { width: 259px; height: 50px; margin: 0 378px 0 16px; background: #cdcdcd; }
.fold { height: 55px; display: flex; align-items: center; padding-left: 21px; gap: 18px; border-bottom: 2px solid #1c1c1c; color: #40a8c8; font-size: 42px; letter-spacing: .012em; }
.fold span { padding-top: 4px; }
.fold.first { height: 63px; border-top: 4px solid #5a5a5a; padding-top: 3px; }
.fold i { width: 15px; height: 31px; background: #40a8c8; clip-path: polygon(0 0, 100% 50%, 0 100%); }

/* documents */
.docs { flex: 1; border-left: 2px solid #111; display: flex; flex-direction: column; }
.doctabs { height: 67px; border-bottom: 2px solid #3296b9; display: grid; grid-template-columns: 472px 217px 300px; }
.doc { display: flex; align-items: center; padding-left: 5px; gap: 5px; }
.doc.on { background: #3296b9; letter-spacing: 0; }
.doc span { margin-right: 3px; padding: 2px 0 0 1px; }
.doc .close { margin-left: 4px; }
.view { flex: 1; background: #fff; position: relative; }
.scene { width: 2758px; height: 1457px; }
.dims { font: 20px "Liberation Sans", Arial, sans-serif; letter-spacing: 0; }
.axis { font: 38px "Open Sans", sans-serif; letter-spacing: 0; }
.angle { position: absolute; left: 476px; top: 1213px; width: 349px; height: 78px; background: #464646; border: 2px solid #1c1c1c; display: flex; align-items: center; }
.angle span { padding-top: 2px; }
.grip { width: 7px; height: 70px; margin: 0 25px 0 1px; background: repeating-conic-gradient(#ddd 0 25%, #464646 0 50%) 0 0 / 4px 4px; }
.abox { margin: 0 10px 0 auto; width: 197px; height: 54px; border: 2px solid #c8c8c8; display: flex; align-items: center; justify-content: space-between; padding: 0 14px 0 12px; }

/* status */
.status { height: 54px; border-top: 2px solid #1c1c1c; display: grid; grid-template-columns: 1887px 1fr; align-items: center; padding: 1px 0 0 4px; font-weight: 700; font-size: 33.500px; letter-spacing: 0; }
.status .mid { letter-spacing: -.007em; }
```
